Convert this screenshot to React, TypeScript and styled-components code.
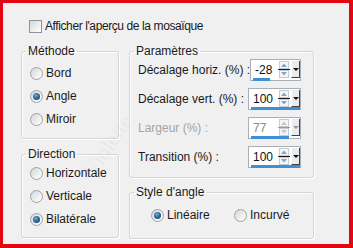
import styled, { createGlobalStyle } from 'styled-components'

const GlobalStyle = createGlobalStyle`
  html, body {
    margin: 0;
    padding: 0;
    background: #ffffff;
  }
  * {
    box-sizing: border-box;
  }
`

const font = `"Liberation Sans", Arial, sans-serif`

type SpinType = {
  label: string
  value: number
  min: number
  max: number
  disabled?: boolean
}

const params: SpinType[] = [
  { label: 'Décalage horiz. (%) :', value: -28, min: -100, max: 100 },
  { label: 'Décalage vert. (%) :', value: 100, min: -100, max: 100 },
  { label: 'Largeur (%) :', value: 77, min: 0, max: 100, disabled: true },
  { label: 'Transition (%) :', value: 100, min: 0, max: 100 },
]

const SpinArrows: React.FC<{ disabled?: boolean }> = ({ disabled }) => {
  const fill = disabled ? '#c4c8cc' : '#86a8c8'
  const line = disabled ? '#9a9a9a' : '#1e1e1e'
  return (
    <svg width="12" height="17" viewBox="0 0 12 17">
      <rect x="1.5" y="0.5" width="9" height="7" fill="#f4f6f8" stroke="#c2ccd6" />
      <path d="M3 6 L6 2.5 L9 6 Z" fill={fill} />
      <line x1="0" y1="8.5" x2="12" y2="8.5" stroke={line} />
      <rect x="1.5" y="9.5" width="9" height="7" fill="#f4f6f8" stroke="#c2ccd6" />
      <path d="M3 11 L9 11 L6 14.5 Z" fill={fill} />
    </svg>
  )
}

const SpinBox: React.FC<{ item: SpinType }> = ({ item }) => {
  const pct = ((item.value - item.min) / (item.max - item.min)) * 100
  return (
    <Spin>
      <SpinTop>
        <Value disabled={item.disabled}>{item.value}</Value>
        <SpinArrows disabled={item.disabled} />
        <DropButton>
          <DropArrow disabled={item.disabled} />
        </DropButton>
      </SpinTop>
      <Track>
        <Fill style={{ width: `${pct}%` }} />
      </Track>
    </Spin>
  )
}

const App: React.FC = () => {
  return (
    <>
      <GlobalStyle />
      <Frame>
        <CheckRow>
          <CheckBox />
          <CheckLabel>Afficher l'aperçu de la mosaïque</CheckLabel>
        </CheckRow>
        <Columns>
          <LeftColumn>
            <Group height={95}>
              <Legend>Méthode</Legend>
              <RadioList top={8}>
                <Option>
                  <Radio />
                  Bord
                </Option>
                <Option>
                  <Radio checked />
                  Angle
                </Option>
                <Option>
                  <Radio />
                  Miroir
                </Option>
              </RadioList>
            </Group>
            <Group height={91}>
              <Legend>Direction</Legend>
              <RadioList top={5}>
                <Option>
                  <Radio />
                  Horizontale
                </Option>
                <Option>
                  <Radio />
                  Verticale
                </Option>
                <Option>
                  <Radio checked />
                  Bilatérale
                </Option>
              </RadioList>
            </Group>
          </LeftColumn>
          <RightColumn>
            <Group height={134}>
              <Legend>Paramètres</Legend>
              <ParamList>
                {params.map((p) => (
                  <ParamRow key={p.label}>
                    <ParamLabel disabled={p.disabled}>{p.label}</ParamLabel>
                    <SpinBox item={p} />
                  </ParamRow>
                ))}
              </ParamList>
            </Group>
            <Group height={54}>
              <Legend>Style d'angle</Legend>
              <StyleRow>
                <Option>
                  <Radio checked />
                  Linéaire
                </Option>
                <Option>
                  <Radio />
                  Incurvé
                </Option>
              </StyleRow>
            </Group>
          </RightColumn>
        </Columns>
        <Watermark>Violette</Watermark>
      </Frame>
    </>
  )
}

const Frame = styled.div`
  position: relative;
  width: 353px;
  height: 248px;
  overflow: hidden;
  border-style: solid;
  border-color: #e50613;
  border-width: 3px 4px 4px 3px;
  background: #f0f0f0;
  padding: 16px 0 0 18px;
  font-family: ${font};
  font-size: 12px;
  color: #1a1a1a;
`

const CheckRow = styled.div`
  display: flex;
  align-items: center;
  gap: 3px;
  height: 14px;
  padding-left: 8px;
`

const CheckBox = styled.span`
  width: 13px;
  height: 13px;
  border: 1px solid #8f9398;
  background: linear-gradient(135deg, #d6d8da 0%, #f4f4f4 70%, #ffffff 100%);
`

const CheckLabel = styled.span`
  letter-spacing: -0.4px;
`

const Columns = styled.div`
  display: flex;
  gap: 10px;
  margin-top: 11px;
`

const LeftColumn = styled.div`
  display: flex;
  flex-direction: column;
  gap: 8px;
  width: 98px;
`

const RightColumn = styled.div`
  display: flex;
  flex-direction: column;
  gap: 7px;
  width: 185px;
`

const Group = styled.fieldset<{ height: number }>(
  (style) => `
    margin: 0;
    min-width: 0;
    height: ${style.height}px;
    padding: 0 0 0 8px;
    border: 1px solid #d5d5cd;
    border-radius: 3px;
    box-shadow: inset 1px 1px 0 #ffffff, 1px 1px 0 #ffffff;
  `
)

const Legend = styled.legend`
  margin-left: -4px;
  padding: 0 2px;
  height: 14px;
  line-height: 14px;
  color: #1a1a1a;
`

const RadioList = styled.div<{ top: number }>(
  (style) => `
    display: flex;
    flex-direction: column;
    gap: 9px;
    padding-top: ${style.top}px;
  `
)

const Option = styled.label`
  display: flex;
  align-items: center;
  gap: 3px;
  height: 14px;
  white-space: nowrap;
`

const Radio = styled.span<{ checked?: boolean }>(
  (style) => `
    position: relative;
    width: 13px;
    height: 13px;
    flex: none;
    border-radius: 50%;
    border: 1px solid #9ea2a6;
    background: linear-gradient(135deg, #d3d5d7 0%, #f2f2f2 65%, #ffffff 100%);
    ${
      style.checked
        ? `&::after {
      content: '';
      position: absolute;
      left: 2px;
      top: 2px;
      width: 7px;
      height: 7px;
      border-radius: 50%;
      background: radial-gradient(circle at 40% 35%, #6fb0d8 0%, #2b6c9c 45%, #173f62 100%);
    }`
        : ''
    }
  `
)

const ParamList = styled.div`
  display: flex;
  flex-direction: column;
  gap: 7px;
  padding: 1px 12px 0 0;
`

const ParamRow = styled.div`
  display: flex;
  align-items: center;
  justify-content: space-between;
  height: 22px;
`

const ParamLabel = styled.span<{ disabled?: boolean }>(
  (style) => `
    color: ${style.disabled ? '#a4a4a4' : '#1a1a1a'};
    white-space: nowrap;
  `
)

const Spin = styled.div`
  display: flex;
  flex-direction: column;
  width: 53px;
  height: 22px;
  border: 1px solid #a8b0b8;
  background: #ffffff;
`

const SpinTop = styled.div`
  display: flex;
  align-items: center;
  flex: 1;
  padding-top: 1px;
`

const Value = styled.span<{ disabled?: boolean }>(
  (style) => `
    flex: 1;
    padding-left: 4px;
    color: ${style.disabled ? '#8a8a8a' : '#111111'};
  `
)

const DropButton = styled.span`
  display: flex;
  align-items: center;
  justify-content: center;
  width: 9px;
  height: 17px;
  margin-left: 1px;
  background: #ececec;
  border-left: 1px solid #ffffff;
  border-right: 1px solid #404040;
  border-bottom: 1px solid #404040;
`

const DropArrow = styled.span<{ disabled?: boolean }>(
  (style) => `
    width: 0;
    height: 0;
    border-left: 3px solid transparent;
    border-right: 3px solid transparent;
    border-top: 3px solid ${style.disabled ? '#9a9a9a' : '#111111'};
  `
)

const Track = styled.div`
  height: 3px;
  margin: 0 0 1px 2px;
`

const Fill = styled.div`
  height: 3px;
  background: #3f8fd6;
`

const StyleRow = styled.div`
  display: grid;
  grid-template-columns: 83px auto;
  padding: 9px 0 0 13px;
`

const Watermark = styled.span`
  position: absolute;
  left: 70px;
  top: 130px;
  transform: rotate(-55deg);
  font-family: "Liberation Serif", serif;
  font-size: 22px;
  color: rgba(0, 0, 0, 0.05);
  pointer-events: none;
`

export default App
